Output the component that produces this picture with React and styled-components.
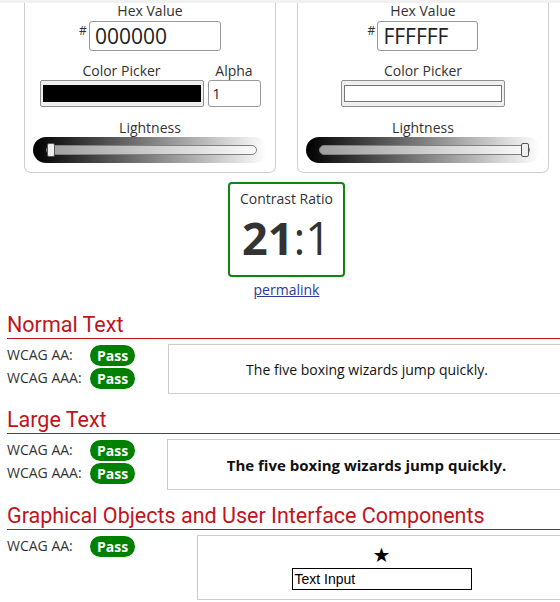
import React from "react";
import styled, { createGlobalStyle } from "styled-components";

const GlobalStyle = createGlobalStyle`
  html, body {
    margin: 0;
    padding: 0;
    background: #fff;
    overflow: hidden;
  }
  body {
    font-family: "Open Sans", "DejaVu Sans", sans-serif;
    font-size: 14px;
    color: #333;
  }
`;

const sections = [
  { title: "Normal Text", levels: ["WCAG AA:", "WCAG AAA:"], side: 161, kind: "normal" },
  { title: "Large Text", levels: ["WCAG AA:", "WCAG AAA:"], side: 160, kind: "large" },
  {
    title: "Graphical Objects and User Interface Components",
    levels: ["WCAG AA:"],
    side: 190,
    kind: "ui",
  },
];

function ColorPanel({ hex, hexWidth, swatch, alpha, lightness }) {
  return (
    <Panel>
      <Label>Hex Value</Label>
      <HexRow>
        <Hash>#</Hash>
        <HexInput $w={hexWidth}>{hex}</HexInput>
      </HexRow>
      <PickerRow>
        <Field>
          <Label $tall>Color Picker</Label>
          <Swatch>
            <SwatchFill $color={swatch} />
          </Swatch>
        </Field>
        {alpha && (
          <Field>
            <Label $tall>Alpha</Label>
            <AlphaInput>{alpha}</AlphaInput>
          </Field>
        )}
      </PickerRow>
      <Label $tall $gap>
        Lightness
      </Label>
      <Slider>
        <Track>
          <Thumb $pos={lightness} />
        </Track>
      </Slider>
    </Panel>
  );
}

export default function App() {
  return (
    <Page>
      <GlobalStyle />
      <TopStrip />
      <Panels>
        <ColorPanel hex="000000" hexWidth={132} swatch="#000" alpha="1" lightness={0} />
        <ColorPanel hex="FFFFFF" hexWidth={101} swatch="#fff" lightness={1} />
      </Panels>

      <RatioBox>
        <RatioLabel>Contrast Ratio</RatioLabel>
        <Ratio>
          <b>21</b>:1
        </Ratio>
      </RatioBox>
      <Permalink href="#">permalink</Permalink>

      {sections.map((s) => (
        <Section key={s.title}>
          <Heading>{s.title}</Heading>
          <Results>
            <Levels $w={s.side}>
              {s.levels.map((l) => (
                <LevelRow key={l}>
                  <LevelName>{l}</LevelName>
                  <Badge>Pass</Badge>
                </LevelRow>
              ))}
            </Levels>
            <Sample $kind={s.kind}>
              {s.kind === "ui" ? (
                <>
                  <Star>★</Star>
                  <TextInput>Text Input</TextInput>
                </>
              ) : (
                "The five boxing wizards jump quickly."
              )}
            </Sample>
          </Results>
        </Section>
      ))}
    </Page>
  );
}

const Page = styled.div`
  width: 559px;
  padding-left: 7px;
`;

const TopStrip = styled.div`
  height: 3px;
  margin-left: -7px;
  width: 580px;
  background: #f1f1f1;
`;

const Panels = styled.div`
  display: flex;
  justify-content: center;
  gap: 21px;
`;

const Panel = styled.div`
  width: 252px;
  box-sizing: border-box;
  border: 1px solid #cfcfcf;
  border-top: 0;
  border-radius: 0 0 7px 7px;
  padding-bottom: 9px;
  display: flex;
  flex-direction: column;
  align-items: center;
`;

const Label = styled.div`
  line-height: ${(p) => (p.$tall ? "18px" : "16px")};
  margin-top: ${(p) => (p.$gap ? "12px" : "0")};
  text-align: center;
  color: #333;
`;

const HexRow = styled.div`
  display: flex;
  align-items: flex-start;
  margin-top: 2px;
`;

const Hash = styled.span`
  font-size: 12px;
  line-height: 12px;
  margin-top: 4px;
  margin-right: 2px;
`;

const HexInput = styled.div`
  width: ${(p) => p.$w}px;
  height: 30px;
  box-sizing: border-box;
  border: 1px solid #999;
  border-radius: 3px;
  padding: 0 5px;
  font-size: 21px;
  line-height: 28px;
  color: #222;
`;

const PickerRow = styled.div`
  display: flex;
  gap: 4px;
  margin-top: 11px;
`;

const Field = styled.div`
  display: flex;
  flex-direction: column;
  align-items: center;
`;

const Swatch = styled.div`
  width: 164px;
  height: 27px;
  box-sizing: border-box;
  border: 1px solid #8f8f8f;
  border-radius: 2px;
  background: #efefef;
  padding: 4px 2px;
  display: flex;
`;

const SwatchFill = styled.div`
  flex: 1;
  background: ${(p) => p.$color};
  border: 1px solid ${(p) => (p.$color === "#fff" ? "#767676" : "#000")};
`;

const AlphaInput = styled.div`
  width: 53px;
  height: 27px;
  box-sizing: border-box;
  border: 1px solid #999;
  border-radius: 3px;
  padding: 0 4px;
  line-height: 25px;
  color: #222;
`;

const Slider = styled.div`
  width: 234px;
  height: 26px;
  box-sizing: border-box;
  padding: 0 10px 0 13px;
  border-radius: 13px;
  background: linear-gradient(to right, #000, #fff);
  display: flex;
  align-items: center;
`;

const Track = styled.div`
  position: relative;
  flex: 1;
  height: 10px;
  box-sizing: border-box;
  border: 1px solid #808080;
  border-radius: 5px;
  background: rgba(255, 255, 255, 0.6);
`;

const Thumb = styled.div`
  position: absolute;
  top: -3px;
  left: calc(${(p) => p.$pos} * (100% - 8px));
  width: 8px;
  height: 14px;
  box-sizing: border-box;
  border: 1px solid #555;
  border-radius: 2px;
  background: #efefef;
`;

const RatioBox = styled.div`
  width: 117px;
  height: 95px;
  box-sizing: border-box;
  margin: 9px auto 0;
  border: 2px solid #0d870d;
  border-radius: 4px;
  padding-top: 6px;
  text-align: center;
`;

const RatioLabel = styled.div`
  line-height: 18px;
`;

const Ratio = styled.div`
  margin-top: 7px;
  font-size: 45px;
  line-height: 46px;
  font-weight: 400;
  color: #333;
  b {
    font-weight: 700;
  }
`;

const Permalink = styled.a`
  display: block;
  width: max-content;
  margin: 4px auto 0;
  line-height: 18px;
  color: #2b3a9e;
`;

const Section = styled.section`
  margin-top: 13px;
`;

const Heading = styled.h2`
  margin: 0;
  font-family: Roboto, "Liberation Sans", sans-serif;
  font-size: 21.5px;
  font-weight: 400;
  line-height: 26px;
  color: #c0141c;
  border-bottom: 1px solid #c0141c;
`;

const Results = styled.div`
  display: flex;
  margin-top: 5px;
`;

const Levels = styled.div`
  width: ${(p) => p.$w}px;
  flex: none;
  display: flex;
  flex-direction: column;
  gap: 1px;
`;

const LevelRow = styled.div`
  display: flex;
  align-items: center;
  height: 22px;
`;

const LevelName = styled.span`
  width: 83px;
  line-height: 22px;
  color: #333;
`;

const Badge = styled.span`
  height: 21px;
  padding: 0 7px;
  border-radius: 11px;
  background: #008000;
  color: #fff;
  font-weight: 700;
  line-height: 21px;
`;

const Sample = styled.div`
  flex: 1;
  box-sizing: border-box;
  height: ${(p) => (p.$kind === "ui" ? 65 : p.$kind === "large" ? 51 : 50)}px;
  border: 1px solid #ccc;
  display: flex;
  flex-direction: column;
  align-items: center;
  justify-content: ${(p) => (p.$kind === "ui" ? "flex-start" : "center")};
  padding-top: ${(p) => (p.$kind === "ui" ? 8 : 0)}px;
  font-size: ${(p) => (p.$kind === "large" ? 15 : 14)}px;
  font-weight: ${(p) => (p.$kind === "large" ? 700 : 400)};
  color: #111;
`;

const Star = styled.div`
  font-family: "DejaVu Sans", sans-serif;
  font-size: 20px;
  line-height: 22px;
  color: #000;
`;

const TextInput = styled.div`
  width: 180px;
  height: 22px;
  box-sizing: border-box;
  margin-top: 2px;
  border: 1px solid #000;
  padding: 0 2px;
  font-family: "Liberation Sans", Arial, sans-serif;
  font-size: 14px;
  line-height: 20px;
  color: #000;
`;
